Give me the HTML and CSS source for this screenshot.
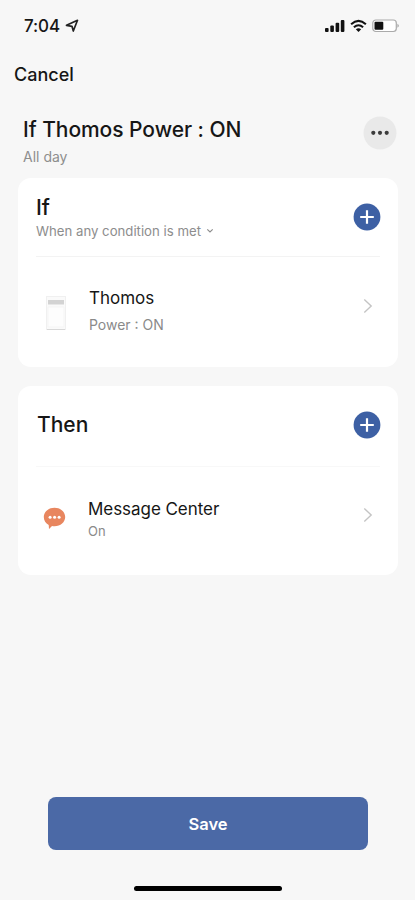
FILE: index.html
```html
<!DOCTYPE html>
<html lang="en">
<head>
<meta charset="utf-8">
<meta name="viewport" content="width=device-width, initial-scale=1">
<title>Automation</title>
<link rel="stylesheet" href="styles.css">
</head>
<body>
<div class="screen">
  <div class="status">
    <span class="time">7:04</span>
    <svg class="loc" width="14" height="14" viewBox="0 0 14 14"><path d="M1.500 6.300 12.500 1.300 8.300 12 7 7.300Z" fill="none" stroke="#222" stroke-width="1.700" stroke-linejoin="round"/></svg>
    <div class="indicators">
      <svg width="20" height="14" viewBox="0 0 20 14" fill="#111"><rect x="0" y="9" width="3.6" height="4" rx="1"/><rect x="5.3" y="6.5" width="3.6" height="6.5" rx="1"/><rect x="10.6" y="3.7" width="3.6" height="9.3" rx="1"/><rect x="15.8" y="1" width="3.6" height="12" rx="1"/></svg>
      <svg width="17" height="14" viewBox="0 0 17 14" fill="none" stroke="#111" stroke-width="2.1"><path d="M1.1 5.2Q8.500-1.300 15.900 5.200M3.900 8.200Q8.500 4.300 13.100 8.200"/><path d="M5.800 10.200Q8.500 8.200 11.200 10.200L8.500 13Z" fill="#111" stroke="none"/></svg>
      <svg width="28" height="14" viewBox="0 0 28 14"><rect x=".8" y="1" width="23.500" height="11.500" rx="3" fill="#fff" stroke="#aaa" stroke-width="1.200"/><rect x="2.500" y="2.800" width="8.800" height="8" rx="1" fill="#111"/><path d="M25.500 4.700Q28 6.700 25.500 8.800Z" fill="#999"/></svg>
    </div>
  </div>
  <div class="nav"><span class="cancel">Cancel</span></div>
  <header class="heading">
    <div>
      <h1>If Thomos Power : ON</h1>
      <p class="period">All day</p>
    </div>
    <svg class="more" width="34" height="34" viewBox="0 0 34 34"><circle cx="17" cy="17" r="16.500" fill="#e9e9e9"/><g fill="#3c3c3c"><circle cx="10.300" cy="16.800" r="2.100"/><circle cx="17" cy="16.800" r="2.100"/><circle cx="23.700" cy="16.800" r="2.100"/></g></svg>
  </header>
  <section class="card">
    <div class="card-head">
      <div>
        <h2>If</h2>
        <p class="mode"><span>When any condition is met</span><svg width="8" height="6" viewBox="0 0 8 6"><path d="M1.300 1.400 4 4 6.700 1.400" fill="none" stroke="#8d8d8d" stroke-width="1.200"/></svg></p>
      </div>
      <svg class="add" width="28" height="28" viewBox="0 0 28 28"><circle cx="14" cy="14" r="13.400" fill="#3d60a4"/><path d="M14 7.200V20.800M7.200 14H20.800" stroke="#fff" stroke-width="2.200"/></svg>
    </div>
    <div class="row">
      <svg class="device" width="20" height="35" viewBox="0 0 20 35"><rect x=".5" y=".5" width="19" height="33" fill="#fafafa" stroke="#f0f0f0"/><rect x="2" y="4" width="16" height="4.500" fill="#d3d3d3"/><path d="M2 11H18V31H2Z" fill="#fdfdfd" stroke="#f5f5f5"/><path d="M1 33.500H19" stroke="#d8d8d8"/></svg>
      <div class="label"><h3 class="thomos">Thomos</h3><p class="power">Power : ON</p></div>
      <svg class="chevron" width="10" height="16" viewBox="0 0 10 16"><path d="M1.300 1.500 8.200 8 1.300 14.500" fill="none" stroke="#c4c4c4" stroke-width="1.400"/></svg>
    </div>
  </section>
  <section class="card card-then">
    <div class="card-head">
      <h2 class="then">Then</h2>
      <svg class="add" width="28" height="28" viewBox="0 0 28 28"><circle cx="14" cy="14" r="13.400" fill="#3d60a4"/><path d="M14 7.200V20.800M7.200 14H20.800" stroke="#fff" stroke-width="2.200"/></svg>
    </div>
    <div class="row">
      <svg class="message" width="23" height="23" viewBox="0 0 23 23"><path d="M11.500.7C17.500.7 22.200 4.900 22.200 10S17.500 19.200 11.500 19.200Q10.200 19.200 9 19L6 22 5.700 17.900C2.700 16.300.8 13.500.8 10 .8 4.900 5.500.7 11.500.7Z" fill="#e8865f"/><g fill="#fff"><circle cx="7.100" cy="10.200" r="1.500"/><circle cx="11.600" cy="10.200" r="1.500"/><circle cx="16.100" cy="10.200" r="1.500"/></g></svg>
      <div class="label"><h3 class="center">Message Center</h3><p class="on">On</p></div>
      <svg class="chevron" width="10" height="16" viewBox="0 0 10 16"><path d="M1.300 1.500 8.200 8 1.300 14.500" fill="none" stroke="#c4c4c4" stroke-width="1.400"/></svg>
    </div>
  </section>
  <button class="save">Save</button>
  <div class="home"></div>
</div>
</body>
</html>
```
FILE: styles.css
```css
* { box-sizing: border-box; }
body, h1, h2, h3, p { margin: 0; }
body { background: #f7f7f7; font-family: Inter, "Liberation Sans", sans-serif; color: #161616; }
svg { display: block; flex: none; }
.screen { width: 100%; height: 900px; display: flex; flex-direction: column; overflow: hidden; }
.status { height: 52px; padding: 0 15px 0 24px; display: flex; align-items: center; }
.time { font-size: 17px; font-weight: 500; line-height: 20px; letter-spacing: -.1px; }
.loc { margin-left: 5px; }
.indicators { display: flex; gap: 5px; margin-left: auto; }
.nav { height: 46px; padding: 0 14px; display: flex; align-items: center; }
.cancel { font-size: 18px; font-weight: 450; line-height: 22px; }
.heading { height: 80px; padding: 18px 18px 0 23px; display: flex; justify-content: space-between; }
h1 { font-size: 21px; line-height: 26px; font-weight: 500; letter-spacing: -.05px; margin-top: 1px; white-space: nowrap; }
.period { font-size: 14px; line-height: 18px; margin-top: 5px; color: #8e8e8e; }
.card { height: 189px; flex: none; margin: 0 17px 0 18px; padding: 0 18px; background: #fff; border-radius: 13px; }
.card-then { margin-top: 19px; }
.card-head { height: 79px; display: flex; align-items: center; justify-content: space-between; border-bottom: 1px solid #f3f3f3; }
.card-then .card-head { height: 81px; padding-bottom: 2px; border-color: #f8f8f8; }
.add { margin-right: -1px; }
h2 { font-size: 21.500px; line-height: 26px; font-weight: 500; }
.then { font-size: 21px; padding-left: 1px; }
.mode { display: flex; align-items: center; gap: 5px; font-size: 13.200px; line-height: 18px; margin-top: 2px; color: #8d8d8d; white-space: nowrap; }
.row { display: flex; height: 98px; align-items: center; padding: 0 7px 0 10px; }
.row .label { margin-left: 23px; padding-top: 8px; white-space: nowrap; }
.device { margin-top: 14px; }
h3 { font-weight: 400; font-size: 17px; line-height: 24px; }
.center { letter-spacing: -.05px; }
.power { font-size: 14px; line-height: 20px; margin-top: 5px; color: #8a8a8a; }
.on { font-size: 13px; line-height: 18px; margin-top: 1px; color: #8a8a8a; }
.chevron { margin-left: auto; }
.card-then .row { height: 95px; padding-left: 7px; }
.card-then .label { margin-left: 22px; }
.message { margin-top: 7px; }
.save { display: block; flex: none; width: 320px; height: 53px; margin: auto auto 0 48px; padding: 0; border: 0; border-radius: 8px; background: #4b69a6; color: #fff; font: 600 16.500px/22px Inter, "Liberation Sans", sans-serif; }
.home { flex: none; width: 148px; height: 5px; border-radius: 3px; background: #000; margin: 36px 0 9px 134px; }
```
